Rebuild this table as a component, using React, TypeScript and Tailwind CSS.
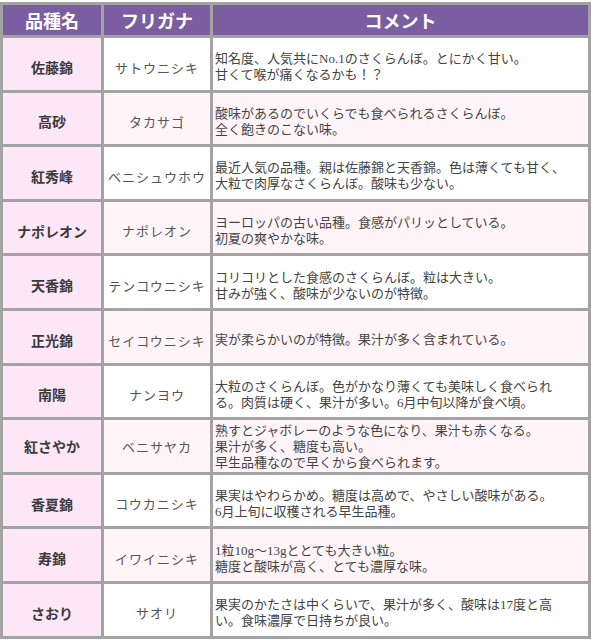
const rows: { name: string; kana: string; lines: string[] }[] = [
  { name: "佐藤錦", kana: "サトウニシキ", lines: ["知名度、人気共にNo.1のさくらんぼ。とにかく甘い。", "甘くて喉が痛くなるかも！？"] },
  { name: "高砂", kana: "タカサゴ", lines: ["酸味があるのでいくらでも食べられるさくらんぼ。", "全く飽きのこない味。"] },
  { name: "紅秀峰", kana: "ベニシュウホウ", lines: ["最近人気の品種。親は佐藤錦と天香錦。色は薄くても甘く、", "大粒で肉厚なさくらんぼ。酸味も少ない。"] },
  { name: "ナポレオン", kana: "ナポレオン", lines: ["ヨーロッパの古い品種。食感がパリッとしている。", "初夏の爽やかな味。"] },
  { name: "天香錦", kana: "テンコウニシキ", lines: ["コリコリとした食感のさくらんぼ。粒は大きい。", "甘みが強く、酸味が少ないのが特徴。"] },
  { name: "正光錦", kana: "セイコウニシキ", lines: ["実が柔らかいのが特徴。果汁が多く含まれている。"] },
  { name: "南陽", kana: "ナンヨウ", lines: ["大粒のさくらんぼ。色がかなり薄くても美味しく食べられ", "る。肉質は硬く、果汁が多い。6月中旬以降が食べ頃。"] },
  { name: "紅さやか", kana: "ベニサヤカ", lines: ["熟すとジャボレーのような色になり、果汁も赤くなる。", "果汁が多く、糖度も高い。", "早生品種なので早くから食べられます。"] },
  { name: "香夏錦", kana: "コウカニシキ", lines: ["果実はやわらかめ。糖度は高めで、やさしい酸味がある。", "6月上旬に収穫される早生品種。"] },
  { name: "寿錦", kana: "イワイニシキ", lines: ["1粒10g～13gととても大きい粒。", "糖度と酸味が高く、とても濃厚な味。"] },
  { name: "さおり", kana: "サオリ", lines: ["果実のかたさは中くらいで、果汁が多く、酸味は17度と高", "い。食味濃厚で日持ちが良い。"] },
];

const sans = { fontFamily: '"Noto Sans CJK JP", "Noto Sans", sans-serif' };
const serif = { fontFamily: '"Liberation Serif", "Noto Sans CJK JP", serif' };

export default function App() {
  return (
    <div className="bg-white w-[593px] h-[640px] pt-[2px]">
      <table className="w-[591px] border-collapse border-[3px] border-[#a3a3a3] table-fixed">
        <colgroup>
          <col className="w-[101px]" />
          <col className="w-[109px]" />
          <col />
        </colgroup>
        <thead>
          <tr className="h-[33px] bg-[#7b5ea1]">
            {["品種名", "フリガナ", "コメント"].map((h) => (
              <th
                key={h}
                style={sans}
                className="border-[3px] border-[#a3a3a3] text-white text-[18px] font-bold text-center leading-none"
              >
                {h}
              </th>
            ))}
          </tr>
        </thead>
        <tbody>
          {rows.map((r, i) => {
            const alt = i % 2 === 1 ? "bg-[#fff5f9]" : "bg-white";
            const pad = r.lines.length > 2 ? "pt-[2px]" : "pt-[7px]";
            return (
              <tr key={r.name} className="h-[54.6px]">
                <td
                  style={sans}
                  className={`border-[3px] border-[#a3a3a3] bg-[#fde6f5] ${pad} text-center text-[14px] font-bold text-[#3a3a3a]`}
                >
                  {r.name}
                </td>
                <td
                  style={sans}
                  className={`border-[3px] border-[#a3a3a3] ${alt} ${pad} text-center text-[13px] text-[#555] tracking-[1px]`}
                >
                  {r.kana}
                </td>
                <td
                  style={serif}
                  className={`border-[3px] border-[#a3a3a3] ${alt} ${pad} px-[2px] text-[13px] leading-[16px] text-[#444]`}
                >
                  {r.lines.map((l) => (
                    <div key={l} className="whitespace-nowrap">
                      {l}
                    </div>
                  ))}
                </td>
              </tr>
            );
          })}
        </tbody>
      </table>
    </div>
  );
}
